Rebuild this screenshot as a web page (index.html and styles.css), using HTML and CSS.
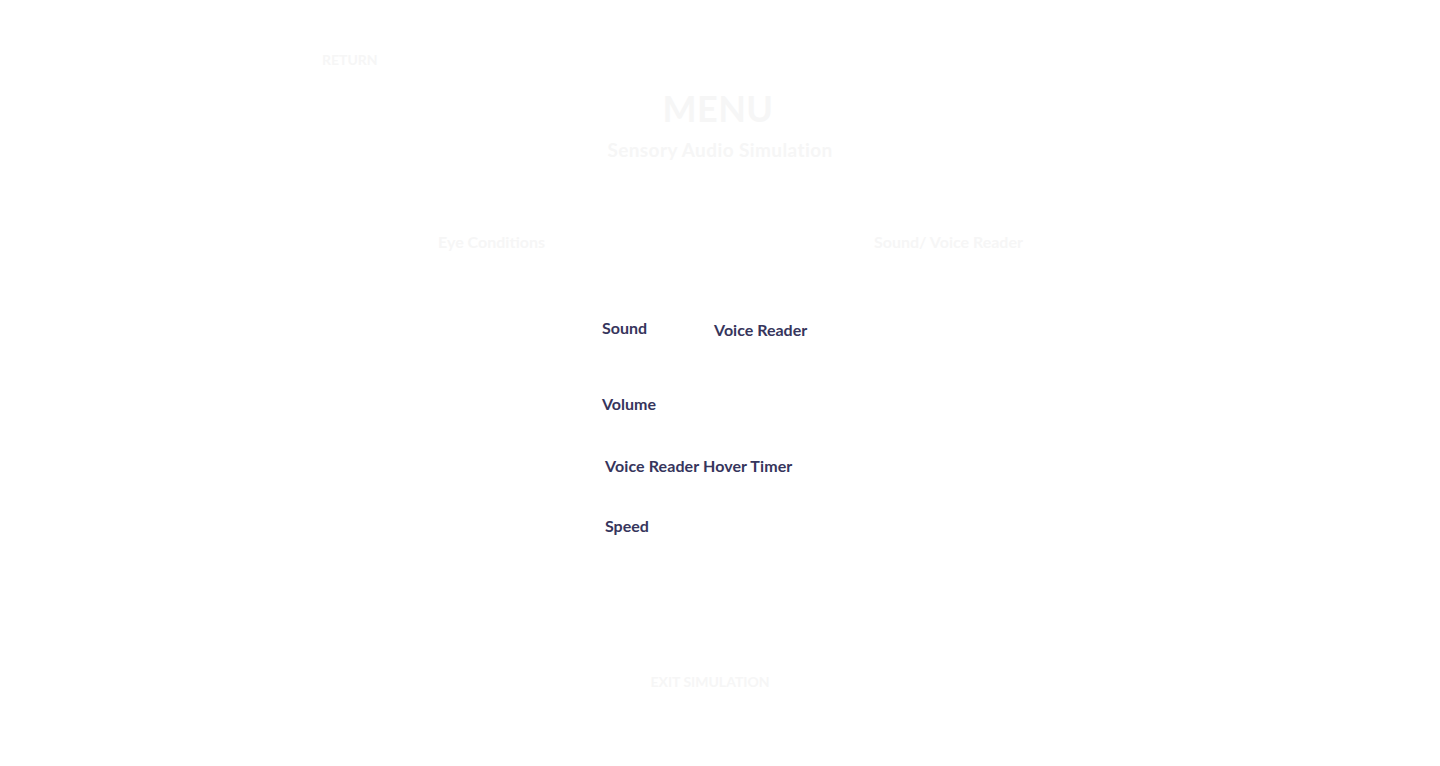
FILE: index.html
```html
<!DOCTYPE html>
<html lang="en">
<head>
<meta charset="utf-8">
<title>Menu</title>
<link rel="stylesheet" href="styles.css">
</head>
<body>
<div class="page">
  <header class="top">
    <a class="return">RETURN</a>
  </header>
  <div class="title-block">
    <h1 class="title">MENU</h1>
    <p class="subtitle">Sensory Audio Simulation</p>
  </div>
  <nav class="tabs">
    <div class="tab tab-left">Eye Conditions</div>
    <div class="tab tab-right">Sound/ Voice Reader</div>
  </nav>
  <section class="settings">
    <div class="row-pair">
      <span class="label">Sound</span>
      <span class="label label-voice">Voice Reader</span>
    </div>
    <div class="label volume">Volume</div>
    <div class="label hover">Voice Reader Hover Timer</div>
    <div class="label speed">Speed</div>
  </section>
  <footer class="bottom">
    <a class="exit">EXIT SIMULATION</a>
  </footer>
</div>
</body>
</html>
```
FILE: styles.css
```css
* { box-sizing: border-box; }
html, body {
  margin: 0;
  padding: 0;
  background: #ffffff;
  font-family: Lato, "Open Sans", sans-serif;
}
.page {
  width: 1440px;
  height: 766px;
  display: flex;
  flex-direction: column;
}
.top {
  padding: 52px 0 0 322px;
  height: 70px;
}
.return {
  font-size: 14px;
  font-weight: 700;
  color: #f6f6f6;
  line-height: 16px;
  display: block;
}
.title-block {
  display: flex;
  flex-direction: column;
  align-items: center;
}
.title {
  margin: 15px 0 0 0;
  font-size: 36px;
  line-height: 46px;
  font-weight: 700;
  color: #f6f6f6;
  letter-spacing: 0.5px;
  transform: translateX(-2px);
}
.subtitle {
  margin: 8px 0 0 0;
  font-size: 19px;
  line-height: 22px;
  font-weight: 700;
  color: #f6f6f6;
  letter-spacing: 0.4px;
}
.tabs {
  display: grid;
  grid-template-columns: 457px 457px;
  justify-content: center;
  margin-top: 72px;
}
.tab {
  font-size: 16px;
  line-height: 18px;
  font-weight: 700;
  color: #f6f6f6;
  text-align: center;
}
.settings {
  padding: 67px 0 0 602px;
  display: flex;
  flex-direction: column;
}
.row-pair {
  display: flex;
  align-items: flex-start;
}
.label {
  font-size: 16px;
  line-height: 20px;
  font-weight: 700;
  color: #36355c;
}
.label-voice {
  margin-left: 67px;
  margin-top: 2px;
}
.volume { margin-top: 54px; }
.hover { margin-top: 42px; padding-left: 3px; letter-spacing: 0.1px; }
.speed { margin-top: 40px; padding-left: 3px; }
.bottom {
  margin-top: 138px;
  display: flex;
  justify-content: center;
  padding-right: 20px;
}
.exit {
  font-size: 14px;
  line-height: 16px;
  font-weight: 700;
  color: #f6f6f6;
}
```
